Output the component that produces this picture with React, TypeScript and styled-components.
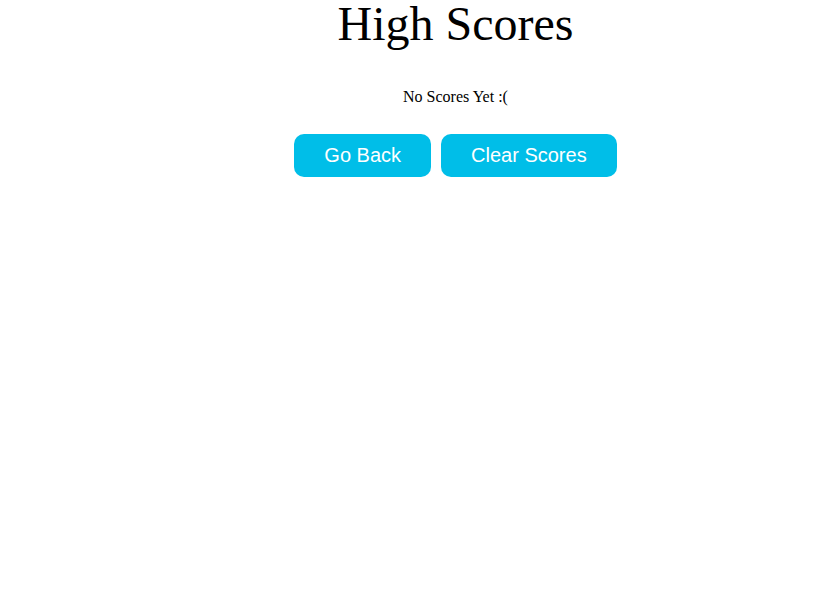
import styled, { createGlobalStyle } from 'styled-components';

const GlobalStyle = createGlobalStyle`
  body {
    margin: 0;
    background: #ffffff;
    font-family: "Liberation Serif", "Times New Roman", serif;
    color: #000000;
  }
`;

const Page = styled.main`
  display: flex;
  flex-direction: column;
  align-items: center;
  padding-left: 80px;
`;

const Title = styled.h1`
  margin: 0;
  font-size: 48px;
  font-weight: 400;
  line-height: 48px;
`;

const Message = styled.p`
  margin: 40px 0 0;
  font-size: 16px;
  line-height: 18px;
`;

const ButtonRow = styled.div`
  display: flex;
  gap: 10px;
  margin-top: 28px;
`;

const Button = styled.button`
  height: 43px;
  padding: 0 30px;
  border: none;
  border-radius: 10px;
  background: #00bee8;
  color: #ffffff;
  font-family: "Liberation Sans", Arial, sans-serif;
  font-size: 20px;
  cursor: pointer;
`;

export default function App() {
  return (
    <>
      <GlobalStyle />
      <Page>
        <Title>High Scores</Title>
        <Message>No Scores Yet :(</Message>
        <ButtonRow>
          <Button>Go Back</Button>
          <Button>Clear Scores</Button>
        </ButtonRow>
      </Page>
    </>
  );
}
